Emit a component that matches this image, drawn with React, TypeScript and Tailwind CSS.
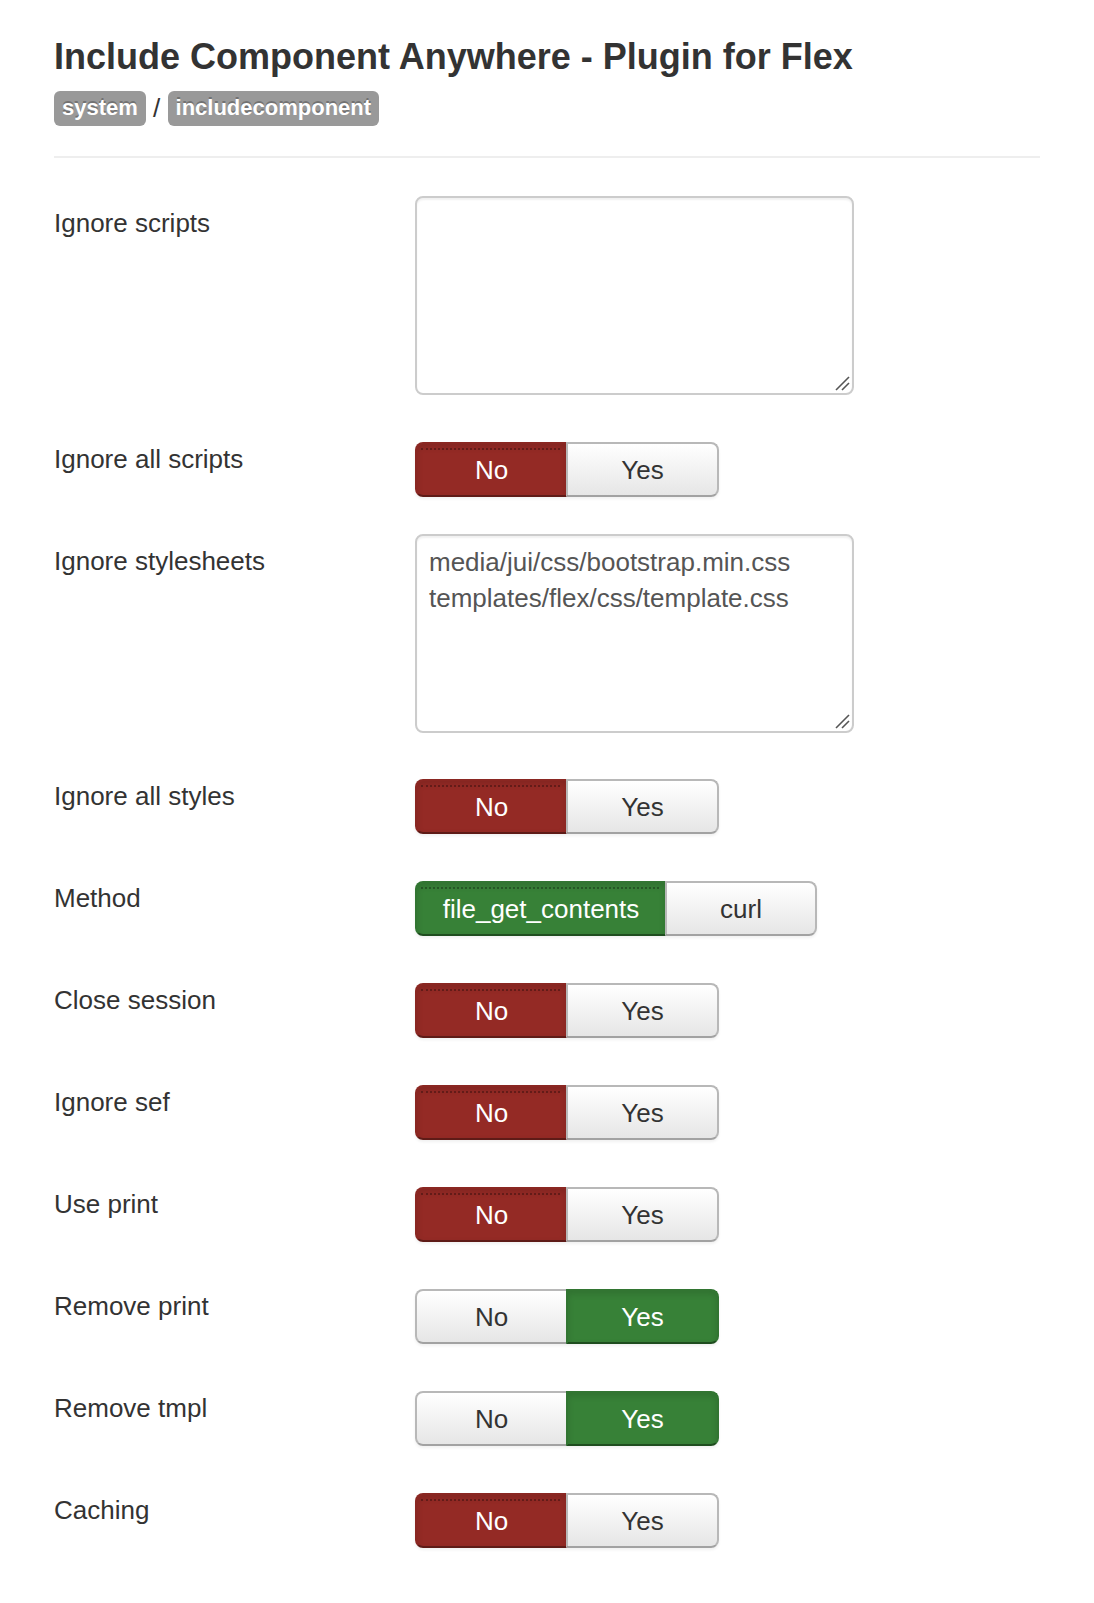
import React from "react";

type Opt = { label: string; w: number };

function Toggle({
  options,
  active,
  color,
}: {
  options: Opt[];
  active: number;
  color: "red" | "green";
}) {
  return (
    <div className="flex h-[55px] rounded-[8px] shadow-[0_2px_3px_rgba(0,0,0,0.06)]">
      {options.map((o, i) => {
        const isActive = i === active;
        const first = i === 0;
        const last = i === options.length - 1;
        const radius = first ? "rounded-l-[8px]" : last ? "rounded-r-[8px]" : "";
        const activeCls =
          color === "red"
            ? "bg-[#942a25] border-[#8a2722] border-b-[#5e1b17] text-white shadow-[inset_0_3px_6px_rgba(0,0,0,0.12)]"
            : "bg-[#378137] border-[#327532] border-b-[#1f4d1f] text-white shadow-[inset_0_3px_6px_rgba(0,0,0,0.12)]";
        const inactiveCls =
          "bg-gradient-to-b from-[#ffffff] to-[#e6e6e6] border-[#b8b8b8] border-b-[#a2a2a2] text-[#333333]";
        return (
          <div
            key={o.label}
            style={{ width: o.w }}
            className={`relative flex h-full items-center justify-center border-2 text-[26px] ${radius} ${
              isActive ? activeCls : inactiveCls
            } ${!first ? "-ml-[2px]" : ""}`}
          >
            {isActive && first && (
              <div className="absolute left-[4px] right-[6px] top-[4px] border-t-[2px] border-dotted border-black/30" />
            )}
            <span className="leading-none">{o.label}</span>
          </div>
        );
      })}
    </div>
  );
}

const yesNo = (w = 153): Opt[] => [
  { label: "No", w },
  { label: "Yes", w },
];

function Row({
  label,
  children,
  mt,
  area,
}: {
  label: string;
  children: React.ReactNode;
  mt: string;
  area?: boolean;
}) {
  return (
    <div className={`flex items-start ${mt}`}>
      <div
        className={`w-[361px] shrink-0 text-[26px] leading-[36px] text-[#333333] ${
          area ? "pt-[9px]" : "-mt-[1px]"
        }`}
      >
        {label}
      </div>
      <div>{children}</div>
    </div>
  );
}

function Area({ value }: { value: string }) {
  return (
    <div className="relative h-[199px] w-[439px]">
      <textarea
        readOnly
        defaultValue={value}
        className="block h-full w-full resize-none rounded-[8px] border-2 border-[#cccccc] bg-white px-[12px] pt-[8px] text-[26px] leading-[36px] text-[#555555] outline-none shadow-[inset_0_2px_2px_rgba(0,0,0,0.06)]"
        style={{ fontFamily: '"Liberation Sans", Arial, sans-serif' }}
      />
      <svg
        className="pointer-events-none absolute bottom-[4px] right-[4px]"
        width="16"
        height="16"
        viewBox="0 0 16 16"
      >
        <line x1="15" y1="2" x2="2" y2="15" stroke="#555" strokeWidth="1.6" />
        <line x1="15" y1="8" x2="8" y2="15" stroke="#555" strokeWidth="1.6" />
      </svg>
    </div>
  );
}

export default function App() {
  return (
    <div
      className="min-h-[1603px] w-full bg-white px-[54px] pb-[55px] pt-[37px] text-[#333333]"
      style={{ fontFamily: '"Liberation Sans", Arial, Helvetica, sans-serif' }}
    >
      <h2 className="text-[36px] font-bold leading-[40px] text-[#333333]">
        Include Component Anywhere - Plugin for Flex
      </h2>
      <div className="mt-[13px] flex items-center text-[26px] leading-[36px]">
        <span className="flex h-[35px] items-center rounded-[6px] bg-[#999999] px-[8px] text-[22px] font-bold text-white [text-shadow:0_-2px_0_rgba(0,0,0,0.25)]">
          system
        </span>
        <span className="whitespace-pre"> / </span>
        <span className="flex h-[35px] items-center rounded-[6px] bg-[#999999] px-[8px] text-[22px] font-bold text-white [text-shadow:0_-2px_0_rgba(0,0,0,0.25)]">
          includecomponent
        </span>
      </div>
      <div className="mt-[30px] h-[2px] w-full bg-[#eeeeee]" />

      <Row label="Ignore scripts" mt="mt-[38px]" area>
        <Area value="" />
      </Row>
      <Row label="Ignore all scripts" mt="mt-[47px]">
        <Toggle options={yesNo()} active={0} color="red" />
      </Row>
      <Row label="Ignore stylesheets" mt="mt-[37px]" area>
        <Area value={"media/jui/css/bootstrap.min.css\ntemplates/flex/css/template.css"} />
      </Row>
      <Row label="Ignore all styles" mt="mt-[46px]">
        <Toggle options={yesNo()} active={0} color="red" />
      </Row>
      <Row label="Method" mt="mt-[47px]">
        <Toggle
          options={[
            { label: "file_get_contents", w: 252 },
            { label: "curl", w: 152 },
          ]}
          active={0}
          color="green"
        />
      </Row>
      <Row label="Close session" mt="mt-[47px]">
        <Toggle options={yesNo()} active={0} color="red" />
      </Row>
      <Row label="Ignore sef" mt="mt-[47px]">
        <Toggle options={yesNo()} active={0} color="red" />
      </Row>
      <Row label="Use print" mt="mt-[47px]">
        <Toggle options={yesNo()} active={0} color="red" />
      </Row>
      <Row label="Remove print" mt="mt-[47px]">
        <Toggle options={yesNo()} active={1} color="green" />
      </Row>
      <Row label="Remove tmpl" mt="mt-[47px]">
        <Toggle options={yesNo()} active={1} color="green" />
      </Row>
      <Row label="Caching" mt="mt-[47px]">
        <Toggle options={yesNo()} active={0} color="red" />
      </Row>
    </div>
  );
}
